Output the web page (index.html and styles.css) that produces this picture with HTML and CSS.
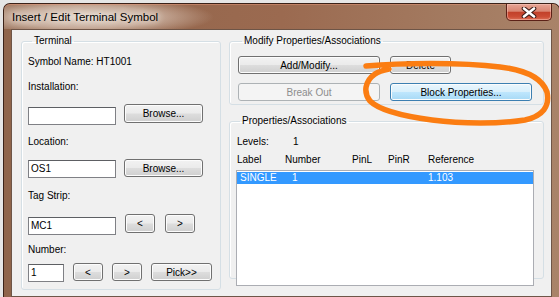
FILE: index.html
```html
<!DOCTYPE html>
<html lang="en">
<head>
    <meta charset="UTF-8">
    <title>Insert / Edit Terminal Symbol</title>
    <link rel="stylesheet" href="styles.css">
</head>
<body>
    <div class="window">
        <div class="titlebar">
            <span class="title">Insert / Edit Terminal Symbol</span>
            <div class="close">
                <svg width="16" height="11" viewBox="0 0 16 11">
                    <path d="M3 1.5 L13 9.5 M13 1.5 L3 9.5" stroke="#3a1a14" stroke-width="4.6" stroke-linecap="round"/>
                    <path d="M3 1.5 L13 9.5 M13 1.5 L3 9.5" stroke="#ffffff" stroke-width="2.6" stroke-linecap="round"/>
                </svg>
            </div>
        </div>

        <div class="client">
            <fieldset class="group terminal">
                <legend>Terminal</legend>
                <div class="text sym">Symbol Name: HT1001</div>
                <div class="text install">Installation:</div>
                <div class="row row1">
                    <div class="textbox wide"></div>
                    <button class="btn browse">Browse...</button>
                </div>
                <div class="text loc">Location:</div>
                <div class="row row2">
                    <div class="textbox wide">OS1</div>
                    <button class="btn browse">Browse...</button>
                </div>
                <div class="text tag">Tag Strip:</div>
                <div class="row row3">
                    <div class="textbox wide">MC1</div>
                    <button class="btn arrow">&lt;</button>
                    <button class="btn arrow">&gt;</button>
                </div>
                <div class="text num">Number:</div>
                <div class="row row4">
                    <div class="textbox small">1</div>
                    <button class="btn arrow">&lt;</button>
                    <button class="btn arrow">&gt;</button>
                    <button class="btn pick">Pick&gt;&gt;</button>
                </div>
            </fieldset>

            <div class="right">
                <fieldset class="group modify">
                    <legend>Modify Properties/Associations</legend>
                    <div class="btnrow first">
                        <button class="btn big">Add/Modify...</button>
                        <button class="btn del">Delete</button>
                    </div>
                    <div class="btnrow second">
                        <button class="btn big disabled">Break Out</button>
                        <button class="btn big hover">Block Properties...</button>
                    </div>
                </fieldset>

                <fieldset class="group props">
                    <legend>Properties/Associations</legend>
                    <div class="levels"><span class="lvl-label">Levels:</span><span>1</span></div>
                    <div class="headers">
                        <span>Label</span>
                        <span>Number</span>
                        <span>PinL</span>
                        <span>PinR</span>
                        <span>Reference</span>
                    </div>
                    <div class="listbox">
                        <div class="item selected">
                            <span>SINGLE</span>
                            <span>1</span>
                            <span>1.103</span>
                        </div>
                    </div>
                </fieldset>
            </div>
        </div>
    </div>

    <svg class="scribble" width="559" height="297" viewBox="0 0 559 297">
        <path d="M366 66 C 400 63 460 62 500 67 C 526 70 542 78 547 92 C 550 106 543 116 525 120 C 500 124 462 124 432 120 C 402 116 379 110 370 101 C 363 92 365 81 375 74 C 379 71 384 70 389 69"
              fill="none" stroke="#fb7d12" stroke-width="5.5" stroke-linecap="round" stroke-linejoin="round"/>
    </svg>
</body>
</html>
```

FILE: styles.css
```css
body {
    margin: 0;
    padding: 3px 0 0 3px;
    background: #e6e6e6;
    font-family: "Liberation Sans", Arial, sans-serif;
    font-size: 10px;
    color: #000;
    position: relative;
    height: 294px;
    overflow: hidden;
}
.window {
    position: relative;
    width: 541px;
    height: 293px;
    padding: 0 7px;
    border: 1px solid #3b2218;
    border-bottom: none;
    border-radius: 7px 7px 0 0;
    background: linear-gradient(90deg, #8f644a 0%, #9b6a50 50%, #a37a60 80%, #a98369 100%);
}
.titlebar {
    height: 25px;
    display: flex;
    align-items: center;
    margin: 0 -7px;
    padding-left: 8px;
    border-radius: 6px 6px 0 0;
    background: radial-gradient(ellipse 130px 20px at 80px 13px, rgba(232, 222, 212, 0.95) 0%, rgba(220, 200, 186, 0.7) 55%, rgba(200, 170, 150, 0) 100%);
    box-shadow: inset 0 1px 0 rgba(230, 150, 120, 0.5);
}
.title {
    font-size: 11.5px;
    color: #000;
    text-shadow: 0 0 6px #f3ece6, 0 0 10px #efe4dc;
}
.close {
    position: absolute;
    top: 0;
    left: 502px;
    width: 44px;
    height: 16px;
    border: 1px solid #5c2117;
    border-top: none;
    border-radius: 0 0 5px 5px;
    background: linear-gradient(#e7a595 0%, #d98672 45%, #c2412a 52%, #cc4d35 80%, #dc7158 100%);
    box-shadow: inset 0 0 0 1px rgba(255, 210, 200, 0.45);
    display: flex;
    align-items: center;
    justify-content: center;
}
.client {
    display: flex;
    gap: 8px;
    height: 261px;
    padding: 5px 5px 0 9px;
    border: 1px solid #6e5547;
    background: #f0f0f0;
}
.group {
    margin: 0;
    border: 1px solid #d5dfe5;
    border-radius: 3px;
    box-shadow: inset 1px 1px 0 #fff;
    min-width: 0;
}
.group legend {
    padding: 0 2px;
    margin-left: 4px;
    line-height: 12px;
}
.terminal {
    width: 192px;
    height: 253px;
    padding: 0 0 0 6px;
}
.text {
    line-height: 14px;
    height: 14px;
}
.sym { margin-top: 8px; }
.install { margin-top: 11px; }
.loc { margin-top: 10px; }
.tag { margin-top: 11px; }
.num { margin-top: 8px; }
.row {
    display: flex;
    align-items: flex-start;
}
.row1, .row2 { gap: 8px; }
.row1 { margin-top: 10px; }
.row2 { margin-top: 10px; }
.row3 { margin-top: 11px; gap: 9px; }
.row4 { margin-top: 6px; gap: 9px; }
.row3 .textbox, .row1 .textbox { margin-top: 3px; }
.row2 .textbox, .row4 .textbox { margin-top: 1px; }
.row3 .arrow:first-of-type { margin-right: 1px; }
.textbox {
    box-sizing: border-box;
    height: 18px;
    border: 1px solid #7f8085;
    border-top-color: #5d5f63;
    background: #fff;
    padding: 0 2px;
    line-height: 16px;
}
.wide { width: 88px; }
.small { width: 36px; }
.btn {
    box-sizing: border-box;
    height: 19px;
    padding: 0;
    font-family: "Liberation Sans", Arial, sans-serif;
    font-size: 10px;
    color: #000;
    border: 1px solid #707070;
    border-radius: 3px;
    background: linear-gradient(#f2f2f2 0%, #ebebeb 48%, #dddddd 52%, #cfcfcf 100%);
    box-shadow: inset 0 0 0 1px #fcfcfc;
}
.row2 .btn, .row4 .btn { height: 18px; }
.browse { width: 79px; }
.arrow { width: 30px; }
.pick { width: 61px; }
.right {
    display: flex;
    flex-direction: column;
    width: 315px;
}
.modify {
    height: 68px;
    padding: 0 0 0 8px;
}
.btnrow {
    display: flex;
    gap: 10px;
}
.btnrow .btn { height: 18px; }
.btnrow.first { margin-top: 9px; }
.btnrow.second { margin-top: 9px; }
.big { width: 142px; }
.del { width: 61px; }
.disabled {
    color: #8d8d8d;
    border-color: #adb2b5;
    background: #f4f4f4;
    box-shadow: none;
}
.hover {
    border-color: #3c7fb1;
    background: linear-gradient(#eaf6fd 0%, #d9f0fc 48%, #bee6fd 52%, #a7d9f5 100%);
}
.props {
    margin-top: 10px;
    height: 162px;
    padding: 0 0 0 6px;
}
.levels {
    margin-top: 8px;
    padding-left: 1px;
    line-height: 14px;
    display: flex;
}
.lvl-label { width: 56px; }
.headers {
    margin-top: 4px;
    padding-left: 1px;
    line-height: 14px;
    display: grid;
    grid-template-columns: 48px 67px 36px 40px auto;
}
.listbox {
    margin-top: 3px;
    width: 298px;
    height: 116px;
    box-sizing: border-box;
    border: 1px solid #abadb3;
    background: #fff;
    padding-top: 1px;
}
.item {
    display: grid;
    grid-template-columns: 52px 136px auto;
    height: 12px;
    line-height: 12px;
    padding-left: 3px;
}
.selected {
    background: #3399ff;
    color: #fff;
}
.scribble {
    position: absolute;
    left: 0;
    top: 0;
    pointer-events: none;
}
```
